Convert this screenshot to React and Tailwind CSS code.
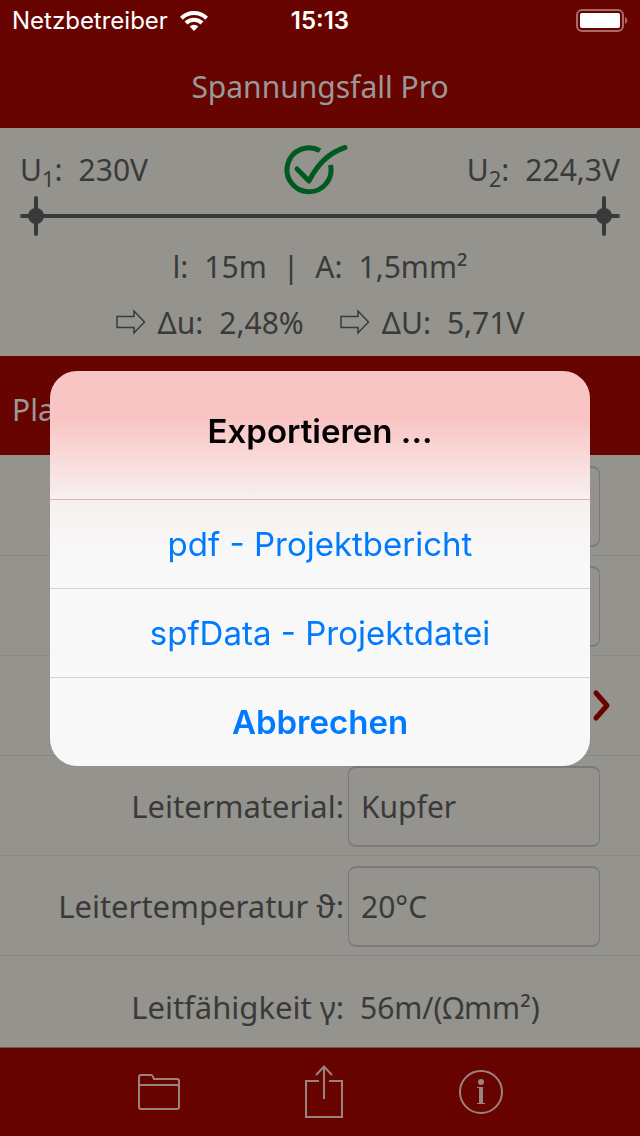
import { useState } from 'react';

const rowBorder = 'border-t border-[#898883]';

function StatusBar() {
  return (
    <div className="grid h-10 grid-cols-3 items-center px-3 pt-0.5 font-['Inter',sans-serif] text-[24px] text-white">
      <div className="flex items-center gap-3">
        <span>Netzbetreiber</span>
        <svg width="28" height="20" viewBox="0 0 28 20" fill="none" stroke="currentColor" strokeWidth="4">
          <path d="M1.4 7.2a18 18 0 0 1 25.2 0" />
          <path d="M6 12a11.4 11.4 0 0 1 16 0" />
          <path d="M14 20l-4.3-4.4a6 6 0 0 1 8.6 0z" fill="currentColor" stroke="none" />
        </svg>
      </div>
      <span className="text-center font-semibold">15:13</span>
      <div className="flex justify-end">
        <svg width="52" height="24" viewBox="0 0 52 24">
          <rect x="1" y="1" width="46" height="21" rx="5" fill="none" stroke="#a66b69" strokeWidth="2" />
          <rect x="4" y="4" width="40" height="15" rx="2" fill="#fff" />
          <path d="M49 8c3 1.5 3 5.500 0 7z" fill="#a66b69" />
        </svg>
      </div>
    </div>
  );
}

function OutlineArrow() {
  return (
    <svg width="30" height="26" viewBox="0 0 30 26" fill="none" stroke="currentColor" strokeWidth="1.5">
      <path d="M1 7.500H18V2L28.500 13L18 24V18.500H1z" />
    </svg>
  );
}

function LineEnd({ flip }) {
  return (
    <svg
      className={flip ? '-scale-x-100' : ''}
      width="32" height="40" viewBox="0 0 32 40"
      fill="#3a3a3a" stroke="#3a3a3a" strokeWidth="4" strokeLinecap="round"
    >
      <path d="M2 20H36M16 2V38" />
      <circle cx="16" cy="20" r="8" stroke="none" />
    </svg>
  );
}

function CircuitLine() {
  return (
    <div className="flex h-10 items-center">
      <LineEnd />
      <div className="h-1 flex-1 bg-[#3a3a3a]" />
      <LineEnd flip />
    </div>
  );
}

function Quantity({ name, value }) {
  return (
    <span className="flex gap-4 whitespace-nowrap">
      <span>{name}:</span>
      <span>{value}</span>
    </span>
  );
}

function Summary() {
  return (
    <section className="h-[228px] px-5 pt-4 text-[30px]">
      <div className="flex h-[52px] items-center justify-between leading-[52px]">
        <div className="flex flex-1">
          <Quantity name={<>U<sub className="text-[22px]">1</sub></>} value="230V" />
        </div>
        <svg width="72" height="52" viewBox="0 0 72 52" fill="none" stroke="#005a20" strokeWidth="5">
          <path d="M36 6.700A22 22 0 1 0 46.500 21" />
          <path d="M13 25l12 12C33 21 44 9 61 3.500" strokeLinecap="round" strokeLinejoin="round" />
        </svg>
        <div className="flex flex-1 justify-end">
          <Quantity name={<>U<sub className="text-[22px]">2</sub></>} value="224,3V" />
        </div>
      </div>
      <CircuitLine />
      <div className="flex h-[60px] items-center justify-center gap-4">
        <Quantity name="l" value="15m" />
        <span>|</span>
        <Quantity name="A" value="1,5mm²" />
      </div>
      <div className="flex h-[52px] items-center justify-center gap-9">
        <div className="flex items-center gap-3">
          <OutlineArrow />
          <Quantity name="Δu" value="2,48%" />
        </div>
        <div className="flex items-center gap-3">
          <OutlineArrow />
          <Quantity name="ΔU" value="5,71V" />
        </div>
      </div>
    </section>
  );
}

function Row({ id, label, children, first }) {
  return (
    <div className={`flex h-[100px] items-center pr-10 pt-0.5 ${first ? '' : rowBorder}`}>
      <label htmlFor={id} className="w-[58%] whitespace-nowrap pr-1 text-right text-[31px]">{label}</label>
      {children}
    </div>
  );
}

const field = 'h-[81px] min-w-0 flex-1 appearance-none rounded-lg border-x border-y-2 border-[#7b797b] bg-transparent px-3 outline-none';

function ExportDialog({ onClose }) {
  const item = 'h-[89px] w-full border-t pt-0.5 text-[#007aff]';
  return (
    <div className="fixed inset-0 flex items-center justify-center px-4 pt-px">
      <div
        role="dialog"
        aria-labelledby="export-title"
        className="w-full max-w-[540px] overflow-hidden rounded-[27px] bg-[#f8f8f8] bg-linear-to-b from-[#f8c5c4] from-12% via-[#f8efef] via-32% to-[#f8f8f8] to-46% text-center font-['Inter',sans-serif] text-[33px]"
      >
        <h2 id="export-title" className="flex h-32 items-center justify-center pb-1.5 font-semibold text-black">Exportieren ...</h2>
        <button className={`${item} border-[#dcb4b8]`} onClick={onClose}>pdf - Projektbericht</button>
        <button className={`${item} border-[#d3d3d5]`} onClick={onClose}>spfData - Projektdatei</button>
        <button className={`${item} border-[#d3d3d5] font-semibold`} onClick={onClose}>Abbrechen</button>
      </div>
    </div>
  );
}

export default function App() {
  const [exporting, setExporting] = useState(true);

  return (
    <div className="flex min-h-screen flex-col bg-[#94938e] font-['Noto_Sans',sans-serif] text-[#3a3a3a]">
      <header className="bg-[#680400]">
        <StatusBar />
        <h1 className="flex h-[88px] items-center justify-center pt-1 text-[30px] text-[#999]">Spannungsfall Pro</h1>
      </header>

      <Summary />

      <h2 className="flex h-[99px] items-center bg-[#680400] px-3 pt-2 text-[30px] text-[#999]">Plan</h2>

      <main className="flex-1 text-[30px]">
        <Row first>
          <input aria-label="Plan" className={field} />
        </Row>
        <Row>
          <input aria-label="Plan" className={field} />
        </Row>
        <div className={`flex h-[100px] items-center justify-end pr-7 ${rowBorder}`}>
          <svg width="20" height="34" viewBox="0 0 20 34" fill="none" stroke="#680400" strokeWidth="5" strokeLinecap="round" strokeLinejoin="round">
            <path d="M4 4L15 16.500L4 29" />
          </svg>
        </div>
        <Row id="material" label="Leitermaterial:">
          <select id="material" className={field}>
            <option>Kupfer</option>
          </select>
        </Row>
        <Row id="temperature" label="Leitertemperatur ϑ:">
          <input id="temperature" defaultValue="20°C" className={field} />
        </Row>
        <div className={`flex h-[92px] items-center pr-10 pt-3 ${rowBorder}`}>
          <span className="w-[58%] whitespace-nowrap pr-1 text-right text-[31px]">Leitfähigkeit γ:</span>
          <output className="whitespace-nowrap pl-3">56m/(Ωmm²)</output>
        </div>
      </main>

      <footer className="flex h-[89px] items-center justify-center border-t border-[#6b5a56] bg-[#680400] text-[#998381]">
        <button aria-label="Projekte">
          <svg width="44" height="38" viewBox="0 0 44 38" fill="none" stroke="currentColor" strokeWidth="2">
            <path d="M2 34V4q0-2 2-2h10q1.500 0 2 2l1 2h23q2 0 2 2v26q0 2-2 2H4q-2 0-2-2zM2 14q0-2 2-2h36q2 0 2 2" />
          </svg>
        </button>
        <button aria-label="Exportieren" className="ml-[123px] mr-[114px]" onClick={() => setExporting(true)}>
          <svg width="40" height="54" viewBox="0 0 40 54" fill="none" stroke="currentColor" strokeWidth="2">
            <path d="M15 16H2V52H38V16H25M20 34V2M12 10L20 1.500L28 10" />
          </svg>
        </button>
        <button aria-label="Info">
          <svg width="46" height="46" viewBox="0 0 46 46" fill="none" stroke="currentColor" strokeWidth="2">
            <circle cx="23" cy="23" r="21" />
            <circle cx="23" cy="13" r="3" fill="currentColor" stroke="none" />
            <path d="M19 18H25V34H27V35H19V34H21V19H19z" fill="currentColor" stroke="none" />
          </svg>
        </button>
      </footer>

      {exporting && <ExportDialog onClose={() => setExporting(false)} />}
    </div>
  );
}
